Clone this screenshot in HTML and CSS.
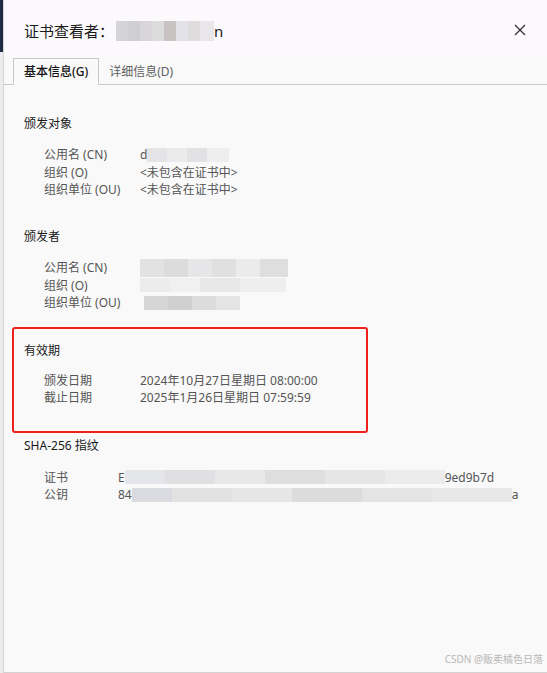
FILE: index.html
```html
<!DOCTYPE html>
<html lang="zh-CN">

<head>
    <meta charset="UTF-8">
    <title>证书查看者</title>
    <link rel="stylesheet" href="styles.css">
</head>

<body>

    <div class="page">
        <!-- sliver of the window behind -->
        <div class="behind"></div>

        <div class="dialog">
            <div class="titlebar">
                <span class="title">证书查看者：<span class="blur blur-title"></span>n</span>
                <svg class="close" width="12" height="12" viewBox="0 0 12 12">
                    <path d="M1 1 L11 11 M11 1 L1 11" stroke="#333" stroke-width="1.3" fill="none" />
                </svg>
            </div>

            <div class="tabs">
                <div class="tab active">基本信息(G)</div>
                <div class="tab">详细信息(D)</div>
            </div>

            <div class="content">
                <div class="section first">
                    <div class="heading">颁发对象</div>
                    <div class="rows">
                        <span class="label">公用名 (CN)</span>
                        <span class="value">d<span class="blur blur-cn"></span></span>
                        <span class="label">组织 (O)</span>
                        <span class="value">&lt;未包含在证书中&gt;</span>
                        <span class="label">组织单位 (OU)</span>
                        <span class="value">&lt;未包含在证书中&gt;</span>
                    </div>
                </div>

                <div class="section">
                    <div class="heading">颁发者</div>
                    <div class="rows">
                        <span class="label">公用名 (CN)</span>
                        <span class="value"><span class="blur blur-i1"></span></span>
                        <span class="label">组织 (O)</span>
                        <span class="value"><span class="blur blur-i2"></span></span>
                        <span class="label">组织单位 (OU)</span>
                        <span class="value"><span class="blur blur-i3"></span></span>
                    </div>
                </div>

                <!-- highlighted validity block -->
                <div class="section marked">
                    <div class="heading">有效期</div>
                    <div class="rows">
                        <span class="label">颁发日期</span>
                        <span class="value">2024年10月27日星期日 08:00:00</span>
                        <span class="label">截止日期</span>
                        <span class="value">2025年1月26日星期日 07:59:59</span>
                    </div>
                </div>

                <div class="section sha">
                    <div class="heading">SHA-256 指纹</div>
                    <div class="rows narrow">
                        <span class="label">证书</span>
                        <span class="value">E<span class="blur blur-h1"></span>9ed9b7d</span>
                        <span class="label">公钥</span>
                        <span class="value">84<span class="blur blur-h2"></span>a</span>
                    </div>
                </div>
            </div>

            <div class="watermark">CSDN @贩卖橘色日落</div>
        </div>
    </div>

</body>

</html>
```

FILE: styles.css
```css
body {
    margin: 0;
    font-family: "Noto Sans", "Noto Sans CJK SC", sans-serif;
    background-color: #f9f9f9;
}

.page {
    display: flex;
    width: 547px;
    height: 673px;
}

.behind {
    width: 3px;
    background: linear-gradient(#1f2b45 0 52px, #ececec 52px 100%);
}

.dialog {
    position: relative;
    flex: 1;
    display: flex;
    flex-direction: column;
    background-color: #f9f9f9;
    border-left: 1px solid #d6d6d6;
    border-bottom: 1px solid #d2d2d2;
}

.titlebar {
    display: flex;
    align-items: center;
    justify-content: space-between;
    height: 57px;
    padding: 4px 21px 0 20px;
    box-sizing: border-box;
    background-color: #fbf9fb;
}

.title {
    display: flex;
    align-items: center;
    font-size: 15px;
    color: #1a1a1a;
}

.close {
    margin-top: -2px;
}

/* Tabs */
.tabs {
    display: flex;
    align-items: flex-end;
    height: 27px;
    padding-left: 9px;
    border-bottom: 1px solid #c9c9c9;
}

.tab {
    height: 25px;
    line-height: 25px;
    padding: 0 10px;
    font-size: 12px;
    color: #606060;
}

.tab.active {
    color: #111;
    font-weight: 500;
    border: 1px solid #c9c9c9;
    border-bottom: none;
    background-color: #f9f9f9;
    margin-bottom: -1px;
    height: 26px;
}

/* Sections */
.content {
    padding: 0 0 0 20px;
    font-size: 12px;
}

.section {
    margin-top: 29px;
}

.section.first {
    margin-top: 30px;
}

.heading {
    line-height: 18px;
    color: #1a1a1a;
    margin-bottom: 13px;
}

.rows {
    display: grid;
    grid-template-columns: 96px 1fr;
    padding-left: 20px;
    line-height: 17.5px;
    color: #555;
}

.rows.narrow {
    grid-template-columns: 74px 1fr;
}

.value {
    display: flex;
    align-items: center;
    white-space: nowrap;
}

.marked {
    width: 356px;
    box-sizing: border-box;
    margin: 15px 0 0 -12px;
    padding: 13px 0 24px 10px;
    border: 2px solid #f0201c;
    border-radius: 3px;
}

.marked .heading {
    margin-bottom: 12px;
}

.sha {
    margin-top: 4px;
}

.sha .heading {
    margin-bottom: 14px;
}

/* mosaic blocks over hidden values */
.blur {
    display: inline-block;
    height: 14px;
}

.blur-title {
    width: 98px;
    height: 20px;
    margin-left: 2px;
    background: linear-gradient(90deg, #d4d4d6 0 12px, #cfcfd2 12px 24px, #d8d6d8 24px 36px, #dcdcdc 36px 48px, #c8c2c2 48px 60px, #e2e2e8 60px 72px, #dedcdc 72px 84px, #e8e6e8 84px 98px);
}

.blur-cn {
    width: 82px;
    background: linear-gradient(90deg, #e4e4e6 0 20px, #ebebeb 20px 40px, #e2e2e4 40px 60px, #eeeeee 60px 82px);
}

.blur-i1 {
    width: 148px;
    height: 18px;
    background: linear-gradient(90deg, #e2e2e2 0 24px, #dcdcdc 24px 48px, #e6e6e8 48px 72px, #e0e0e0 72px 96px, #ebebeb 96px 120px, #dedede 120px 148px);
}

.blur-i2 {
    width: 146px;
    background: linear-gradient(90deg, #ececec 0 30px, #f0f0f0 30px 60px, #e8e8e8 60px 100px, #eeeeee 100px 146px);
}

.blur-i3 {
    width: 96px;
    margin-left: 4px;
    background: linear-gradient(90deg, #d6d6d6 0 24px, #d0d0d0 24px 48px, #dcdcdc 48px 72px, #e4e4e4 72px 96px);
}

.blur-h1 {
    width: 320px;
    background: linear-gradient(90deg, #e4e6ea 0 40px, #e0e0e2 40px 90px, #e8e8e8 90px 140px, #dedede 140px 200px, #e6e6e6 200px 260px, #ececec 260px 320px);
}

.blur-h2 {
    width: 380px;
    background: linear-gradient(90deg, #dadbe0 0 40px, #e2e2e2 40px 100px, #e6e6e6 100px 160px, #dcdcdc 160px 230px, #e4e4e4 230px 300px, #e8e8e8 300px 380px);
}

.watermark {
    position: absolute;
    right: 4px;
    bottom: 6px;
    font-size: 10px;
    color: #b8b8b8;
}
```
